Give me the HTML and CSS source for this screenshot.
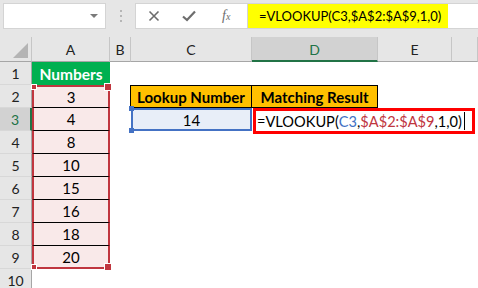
FILE: index.html
```html
<!DOCTYPE html>
<html lang="en">
<head>
    <meta charset="UTF-8">
    <meta name="viewport" content="width=device-width, initial-scale=1.0">
    <title>VLOOKUP</title>
    <link rel="stylesheet" href="styles.css">
</head>
<body>
    <div class="toolbar">
        <div class="namebox"><span class="caret"></span></div>
        <div class="grip">
            <svg width="4" height="14" viewBox="0 0 4 14"><circle cx="2" cy="2" r="1" fill="#a6a6a6"/><circle cx="2" cy="7" r="1" fill="#a6a6a6"/><circle cx="2" cy="12" r="1" fill="#a6a6a6"/></svg>
        </div>
        <div class="fxgroup">
            <svg width="12" height="12" viewBox="0 0 12 12"><path d="M1.5 1.5 L10.5 10.5 M10.5 1.5 L1.5 10.5" stroke="#6d6d6d" stroke-width="1.6"/></svg>
            <svg width="14" height="12" viewBox="0 0 14 12"><path d="M1 6.5 L5 10 L13 1.5" stroke="#6d6d6d" stroke-width="2.2" fill="none"/></svg>
            <span class="fx">f<small>x</small></span>
        </div>
        <div class="formula"><span>=VLOOKUP(C3,$A$2:$A$9,1,0)</span></div>
    </div>

    <div class="sheet">
        <div class="corner"></div>
        <div class="ch">A</div>
        <div class="ch">B</div>
        <div class="ch">C</div>
        <div class="ch active">D</div>
        <div class="ch">E</div>
        <div class="ch"></div>

        <div class="rh">1</div>
        <div class="c green">Numbers</div>
        <div class="c"></div><div class="c"></div><div class="c"></div><div class="c"></div><div class="c"></div>

        <div class="rh">2</div>
        <div class="c num first">3</div>
        <div class="c"></div>
        <div class="c orange">Lookup Number</div>
        <div class="c orange">Matching Result</div>
        <div class="c"></div><div class="c"></div>

        <div class="rh active">3</div>
        <div class="c num">4</div>
        <div class="c"></div>
        <div class="c lookup">14</div>
        <div class="c editcell">
            <div class="edit">=VLOOKUP(<span class="blue">C3</span>,<span class="red">$A$2:$A$9</span>,1,0)<span class="cursor"></span></div>
        </div>

        <div class="rh">4</div>
        <div class="c num">8</div>
        <div class="c"></div><div class="c"></div><div class="c"></div><div class="c"></div><div class="c"></div>

        <div class="rh">5</div>
        <div class="c num">10</div>
        <div class="c"></div><div class="c"></div><div class="c"></div><div class="c"></div><div class="c"></div>

        <div class="rh">6</div>
        <div class="c num">15</div>
        <div class="c"></div><div class="c"></div><div class="c"></div><div class="c"></div><div class="c"></div>

        <div class="rh">7</div>
        <div class="c num">16</div>
        <div class="c"></div><div class="c"></div><div class="c"></div><div class="c"></div><div class="c"></div>

        <div class="rh">8</div>
        <div class="c num">18</div>
        <div class="c"></div><div class="c"></div><div class="c"></div><div class="c"></div><div class="c"></div>

        <div class="rh">9</div>
        <div class="c num last">20</div>
        <div class="c"></div><div class="c"></div><div class="c"></div><div class="c"></div><div class="c"></div>

        <div class="rh">10</div>
        <div class="c"></div><div class="c"></div><div class="c"></div><div class="c"></div><div class="c"></div><div class="c"></div>
    </div>
</body>
</html>
```

FILE: styles.css
```css
* {
    box-sizing: border-box;
}
body {
    margin: 0;
    font-family: Lato, "Liberation Sans", sans-serif;
    background-color: #ffffff;
    color: #000;
    overflow: hidden;
}
.toolbar {
    display: flex;
    align-items: flex-start;
    height: 37px;
    padding-top: 3px;
    background-color: #e6e6e6;
}
.namebox {
    position: relative;
    width: 103px;
    height: 26px;
    margin-left: 3px;
    background-color: #fff;
    border: 1px solid #d4d4d4;
}
.caret {
    position: absolute;
    right: 7px;
    top: 10px;
    border-left: 4px solid transparent;
    border-right: 4px solid transparent;
    border-top: 4px solid #7a7a7a;
}
.grip {
    width: 29px;
    height: 26px;
    display: flex;
    align-items: center;
    justify-content: center;
}
.fxgroup {
    display: flex;
    align-items: center;
    width: 113px;
    height: 26px;
    padding-left: 12px;
    gap: 22px;
    background-color: #fff;
    border: 1px solid #d4d4d4;
}
.fx {
    font-family: "Liberation Serif", serif;
    font-style: italic;
    font-size: 14px;
    color: #6d6d6d;
    margin-left: 4px;
}
.fx small {
    font-size: 10px;
}
.formula {
    flex: 1;
    height: 26px;
    background-color: #fff;
    border-top: 1px solid #d4d4d4;
    border-bottom: 1px solid #d4d4d4;
}
.formula span {
    display: flex;
    align-items: center;
    width: 200px;
    height: 24px;
    padding-left: 11px;
    background-color: #ffff00;
    font-size: 13px;
}
.sheet {
    display: grid;
    grid-template-columns: 32px 78px 21px 121px 126px 74px 1fr;
    grid-template-rows: 25px repeat(10, 23px);
}
.corner {
    position: relative;
    background-color: #e6e6e6;
    border-right: 1px solid #c6c6c6;
    border-bottom: 1px solid #a6a6a6;
}
.corner::after {
    content: "";
    position: absolute;
    right: 3px;
    bottom: 3px;
    border-left: 15px solid transparent;
    border-bottom: 15px solid #b4b4b4;
}
.ch {
    display: flex;
    align-items: center;
    justify-content: center;
    padding-top: 1px;
    font-size: 14px;
    color: #222;
    background-color: #e6e6e6;
    border-right: 1px solid #c6c6c6;
    border-bottom: 1px solid #a6a6a6;
}
.ch.active {
    background-color: #d2d2d2;
    color: #217346;
    border-bottom: 2px solid #217346;
}
.rh {
    display: flex;
    align-items: center;
    justify-content: center;
    font-size: 14px;
    color: #222;
    background-color: #e6e6e6;
    border-right: 1px solid #a6a6a6;
    border-bottom: 1px solid #d8d8d8;
}
.rh.active {
    background-color: #d2d2d2;
    color: #217346;
    border-right: 2px solid #217346;
}
.c {
    display: flex;
    align-items: center;
    justify-content: center;
    font-size: 15px;
    position: relative;
}
.green {
    background-color: #00b050;
    color: #fff;
    font-weight: bold;
    font-size: 15.5px;
}
.num {
    background-color: #f9e9e9;
    border-left: 2px solid #c0363f;
    border-right: 2px solid #c0363f;
    border-bottom: 1px solid #000;
}
.num.first {
    border-top: 2px solid #c0363f;
}
.num.first::before,
.num.last::before {
    content: "";
    position: absolute;
    left: -3px;
    width: 4px;
    height: 4px;
    background-color: #c0363f;
    border: 1px solid #fff;
}
.num.first::before {
    top: -3px;
}
.num.last::before {
    bottom: -3px;
}
.num.first::after,
.num.last::after {
    content: "";
    position: absolute;
    right: -4px;
    width: 6px;
    height: 6px;
    background-color: #c0363f;
    border: 1px solid #fff;
}
.num.first::after {
    top: -4px;
}
.num.last::after {
    bottom: -4px;
}
.num.last {
    border-bottom: 2px solid #c0363f;
}
.orange {
    background-color: #ffc000;
    font-weight: bold;
    border: 1px solid #000;
    margin-left: -1px;
}
.lookup {
    background-color: #e8eef8;
    border: 2px solid #4472c4;
}
.lookup::before,
.lookup::after {
    content: "";
    position: absolute;
    left: -4px;
    width: 5px;
    height: 5px;
    background-color: #4472c4;
}
.lookup::before {
    top: -4px;
}
.lookup::after {
    bottom: -4px;
}
.editcell {
    grid-column: span 3;
    justify-content: flex-start;
    align-items: stretch;
}
.edit {
    display: flex;
    align-items: center;
    width: 222px;
    height: 26px;
    margin-left: 1px;
    padding-left: 1px;
    font-size: 14.6px;
    background-color: #fff;
    border: 3px solid #ff0000;
    white-space: nowrap;
}
.blue {
    color: #4472c4;
}
.red {
    color: #c0363f;
}
.cursor {
    display: inline-block;
    width: 1px;
    height: 18px;
    margin-left: 2px;
    background-color: #000;
}
```
